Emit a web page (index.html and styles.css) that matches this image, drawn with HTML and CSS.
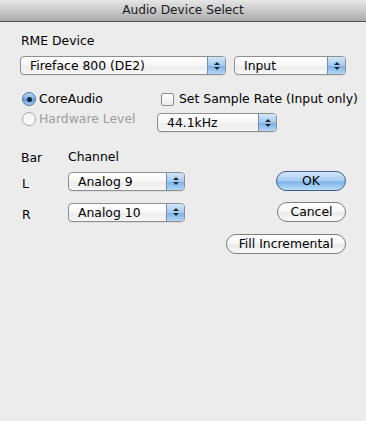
FILE: index.html
```html
<!DOCTYPE html>
<html lang="en">
<head>
    <meta charset="UTF-8">
    <title>Audio Device Select</title>
    <link rel="stylesheet" href="styles.css">
</head>
<body>
    <div class="window">
        <div class="titlebar">Audio Device Select</div>
        <div class="content">
            <div class="section-label">RME Device</div>
            <div class="device-row">
                <div class="popup popup-device">
                    <span class="popup-text">Fireface 800 (DE2)</span>
                    <span class="stepper"><i class="up"></i><i class="down"></i></span>
                </div>
                <div class="popup popup-dir">
                    <span class="popup-text">Input</span>
                    <span class="stepper"><i class="up"></i><i class="down"></i></span>
                </div>
            </div>
            <div class="mode-grid">
                <label class="option">
                    <span class="radio checked"></span>CoreAudio
                </label>
                <label class="option option-check">
                    <span class="checkbox"></span>Set Sample Rate (Input only)
                </label>
                <label class="option disabled">
                    <span class="radio"></span>Hardware Level
                </label>
                <div class="popup popup-rate">
                    <span class="popup-text">44.1kHz</span>
                    <span class="stepper"><i class="up"></i><i class="down"></i></span>
                </div>
            </div>
            <div class="channel-head">
                <div class="col-bar">Bar</div>
                <div class="col-chan">Channel</div>
            </div>
            <div class="channel-grid">
                <div class="bar-name">L</div>
                <div class="popup popup-chan">
                    <span class="popup-text">Analog 9</span>
                    <span class="stepper"><i class="up"></i><i class="down"></i></span>
                </div>
                <button class="btn btn-default btn-ok">OK</button>
                <div class="bar-name">R</div>
                <div class="popup popup-chan">
                    <span class="popup-text">Analog 10</span>
                    <span class="stepper"><i class="up"></i><i class="down"></i></span>
                </div>
                <button class="btn btn-cancel">Cancel</button>
                <button class="btn btn-fill">Fill Incremental</button>
            </div>
        </div>
    </div>
</body>
</html>
```

FILE: styles.css
```css
* {
    margin: 0;
    padding: 0;
    box-sizing: border-box;
}
body {
    background: #ececec;
    font-family: "DejaVu Sans", "Liberation Sans", sans-serif;
    font-size: 12.4px;
    color: #000;
    width: 366px;
    height: 421px;
    overflow: hidden;
}
.titlebar {
    height: 22px;
    line-height: 21px;
    text-align: center;
    font-size: 12.2px;
    color: #1a1a1a;
    background: linear-gradient(#e6e6e6 0%, #cfcfcf 40%, #ababab 100%);
    border-bottom: 1px solid #515151;
    border-radius: 5px 5px 0 0;
}
.content {
    padding: 11px 20px 0 20px;
}
.section-label {
    line-height: 16px;
    padding-left: 1px;
}
.device-row {
    display: flex;
    gap: 8px;
    margin-top: 7px;
}

/* popup buttons */
.popup {
    height: 19px;
    display: flex;
    align-items: center;
    border: 1px solid #8f8f8f;
    border-radius: 4px;
    background: linear-gradient(#ffffff 0%, #f7f7f7 50%, #ececec 55%, #f6f6f6 100%);
    box-shadow: 0 1px 0 rgba(0, 0, 0, 0.06);
}
.popup-text {
    flex: 1;
    padding-left: 9px;
    line-height: 17px;
    white-space: nowrap;
}
.stepper {
    width: 18px;
    height: 17px;
    display: flex;
    flex-direction: column;
    align-items: center;
    justify-content: center;
    gap: 2px;
    border-left: 1px solid #6f8fb8;
    border-radius: 0 3px 3px 0;
    background: linear-gradient(#d3e6f8 0%, #a4c9ee 50%, #7fb2e6 55%, #b3d6f6 100%);
}
.stepper i {
    display: block;
    width: 0;
    height: 0;
    border-left: 3px solid transparent;
    border-right: 3px solid transparent;
}
.stepper .up {
    border-bottom: 3px solid #1e2a3a;
}
.stepper .down {
    border-top: 3px solid #1e2a3a;
}
.popup-device {
    width: 206px;
}
.popup-dir {
    width: 112px;
}
.popup-rate {
    width: 120px;
    align-self: start;
    margin-top: 4px;
}
.popup-chan {
    width: 117px;
}

/* radio + checkbox */
.mode-grid {
    display: grid;
    grid-template-columns: 137px 1fr;
    grid-template-rows: 20px 20px;
    margin-top: 14px;
    align-items: center;
}
.option {
    display: flex;
    align-items: center;
    gap: 3px;
    line-height: 16px;
    white-space: nowrap;
}
.option-check {
    margin-left: 4px;
    gap: 5px;
}
.option.disabled {
    color: #9d9d9d;
}
.radio {
    width: 14px;
    height: 14px;
    margin-left: 2px;
    border-radius: 50%;
    border: 1px solid #a9a9a9;
    background: linear-gradient(#f2f2f2, #fdfdfd);
    display: flex;
    align-items: center;
    justify-content: center;
}
.radio.checked {
    border-color: #4b6f9c;
    background: linear-gradient(#b9d6f3 0%, #7fb1e6 50%, #5f9ce0 55%, #a8d0f5 100%);
}
.radio.checked::after {
    content: "";
    width: 5px;
    height: 5px;
    border-radius: 50%;
    background: #15243a;
}
.checkbox {
    width: 13px;
    height: 13px;
    border: 1px solid #8c8c8c;
    border-radius: 2px;
    background: linear-gradient(#ffffff, #ececec);
}

/* channel table */
.channel-head {
    display: flex;
    margin-top: 20px;
    line-height: 16px;
}
.col-bar {
    width: 48px;
    padding-left: 1px;
    padding-top: 1px;
}
.channel-grid {
    display: grid;
    grid-template-columns: 48px 120px 1fr;
    grid-template-rows: 20px 20px 20px;
    row-gap: 11px;
    margin-top: 5px;
    align-items: center;
}
.bar-name {
    padding-left: 2px;
    padding-top: 4px;
}

/* push buttons */
.btn {
    justify-self: end;
    height: 20px;
    border-radius: 10px;
    border: 1px solid #7d7d7d;
    font-family: inherit;
    font-size: 12.4px;
    line-height: 18px;
    color: #000;
    background: linear-gradient(#ffffff 0%, #f6f6f6 50%, #e9e9e9 55%, #fafafa 100%);
}
.btn-ok {
    width: 70px;
    border-color: #3f5f8a;
    background: linear-gradient(#d4e7fa 0%, #a6cbf0 50%, #7db3ea 55%, #b9ddf9 100%);
}
.btn-cancel {
    width: 69px;
}
.btn-fill {
    width: 120px;
    grid-column: 2 / 4;
    margin-top: 1px;
}
```
